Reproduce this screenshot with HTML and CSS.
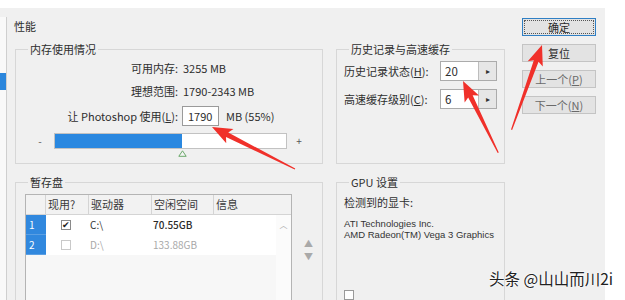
FILE: index.html
```html
<!DOCTYPE html>
<html lang="zh-CN">
<head>
<meta charset="utf-8">
<title>性能</title>
<link rel="stylesheet" href="styles.css">
</head>
<body>
<div class="page">
  <div class="dialog">
    <div class="nav"><div class="nav-sel"></div></div>
    <div class="main">
      <div class="title">性能</div>
      <div class="groups">
        <div class="group mem">
          <div class="legend">内存使用情况</div>
          <div class="mem-grid">
            <span class="lbl">可用内存:</span><span class="val">3255 MB</span>
            <span class="lbl">理想范围:</span><span class="val">1790-2343 MB</span>
            <span class="lbl">让 Photoshop 使用(<u>L</u>):</span>
            <span class="use"><span class="input">1790</span><span class="val">MB (55%)</span></span>
          </div>
          <div class="slider-row">
            <span class="pm">-</span>
            <div class="bar">
              <div class="fill" style="width:55%"></div>
              <svg class="thumb" width="9" height="7" viewBox="0 0 9 7"><path d="M4.5 0.8 L8.2 6.3 L0.8 6.3 Z" fill="#f4f4f4" stroke="#6aa86a" stroke-width="1"/></svg>
            </div>
            <span class="pm">+</span>
          </div>
        </div>

        <div class="group hist">
          <div class="legend">历史记录与高速缓存</div>
          <div class="hist-grid">
            <span class="lbl">历史记录状态(<u>H</u>):</span>
            <span class="spin"><span class="spin-val">20</span><span class="spin-btn">▸</span></span>
            <span class="lbl">高速缓存级别(<u>C</u>):</span>
            <span class="spin"><span class="spin-val">6</span><span class="spin-btn">▸</span></span>
          </div>
        </div>

        <div class="group scratch">
          <div class="legend">暂存盘</div>
          <div class="scratch-body">
            <div class="table">
              <div class="thead">
                <span class="th"></span>
                <span class="th">现用?</span>
                <span class="th">驱动器</span>
                <span class="th">空闲空间</span>
                <span class="th last">信息</span>
              </div>
              <div class="tbody">
                <div class="rows">
                  <span class="num">1</span>
                  <span class="cell center"><span class="check on">✔</span></span>
                  <span class="cell">C:\</span>
                  <span class="cell strong">70.55GB</span>
                  <span class="cell"></span>
                  <span class="num">2</span>
                  <span class="cell center"><span class="check"></span></span>
                  <span class="cell dim">D:\</span>
                  <span class="cell dim">133.88GB</span>
                  <span class="cell"></span>
                </div>
                <div class="vscroll"><span class="caret">︿</span></div>
              </div>
            </div>
            <div class="updown"><span>▲</span><span>▼</span></div>
          </div>
        </div>

        <div class="group gpu">
          <div class="legend">GPU 设置</div>
          <div class="gpu-label">检测到的显卡:</div>
          <div class="gpu-info">ATI Technologies Inc.<br>AMD Radeon(TM) Vega 3 Graphics</div>
          <div class="gpu-check"><span class="check"></span></div>
        </div>
      </div>
    </div>
    <div class="buttons">
      <div class="btn default"><span class="focus">确定</span></div>
      <div class="btn">复位</div>
      <div class="btn dis">上一个(<u>P</u>)</div>
      <div class="btn dis">下一个(<u>N</u>)</div>
    </div>
  </div>

  <svg class="arrows" width="625" height="300" viewBox="0 0 625 300">
    <g fill="#f0302a">
      <path transform="translate(212,127) rotate(26.8)" d="M0 0 L20 -8 L17 -2.4 L93 -0.5 L93 0.7 L17 2.6 L20 8 Z"/>
      <path transform="translate(463,81) rotate(63.8)" d="M0 0 L20 -8 L17 -2.4 L80 -0.5 L80 0.7 L17 2.6 L20 8 Z"/>
      <path transform="translate(542,45) rotate(109.7)" d="M0 0 L20 -8 L17 -2.4 L90 -0.5 L90 0.7 L17 2.6 L20 8 Z"/>
    </g>
  </svg>
  <div class="watermark">头条 @山山而川2i</div>
</div>
</body>
</html>
```

FILE: styles.css
```css
* { box-sizing: border-box; }
html, body { margin: 0; padding: 0; }
body {
  background: #ffffff;
  font-family: "Noto Sans CJK SC", "Noto Sans", sans-serif;
  font-size: 11px;
  color: #2e2e2e;
  width: 625px;
  height: 300px;
  overflow: hidden;
}
u { text-decoration: underline; text-underline-offset: 1px; }
.page { position: relative; width: 625px; height: 300px; overflow: hidden; }

.dialog {
  margin-top: 8px;
  width: 605px;
  height: 292px;
  background: #f0f0f0;
  display: flex;
  overflow: hidden;
}

.nav {
  width: 7px;
  margin-top: 9px;
  background: #f9f9f9;
  border-right: 1px solid #cfcfcf;
}
.nav-sel {
  margin-top: 56px;
  height: 17px;
  width: 6px;
  background: #2b86dc;
}

.main {
  width: 498px;
  padding: 11px 0 0 8px;
}
.title { line-height: 14px; height: 14px; margin-left: -1px; }

.groups {
  margin-top: 16px;
  display: grid;
  grid-template-columns: 308px 169px;
  grid-template-rows: 115px 140px;
  column-gap: 13px;
  row-gap: 18px;
}

.group {
  border: 1px solid #d7d7d7;
  position: relative;
}
.legend {
  width: fit-content;
  margin: -8px 0 0 12px;
  padding: 0 2px;
  background: #f0f0f0;
  line-height: 14px;
  height: 14px;
}

/* memory */
.mem-grid {
  margin-top: 4px;
  display: grid;
  grid-template-columns: 162px auto;
  grid-template-rows: 16px 16px 20px;
  column-gap: 5px;
  row-gap: 7px;
  align-items: center;
  line-height: 16px;
}
.lbl { text-align: right; white-space: nowrap; }
.val { white-space: nowrap; }
.use { display: flex; align-items: center; gap: 7px; margin-left: -1px; }
.input {
  width: 37px;
  height: 20px;
  border: 1px solid #9a9a9a;
  background: #fff;
  padding-left: 5px;
  line-height: 18px;
}

.slider-row {
  margin-top: 7px;
  display: flex;
  align-items: center;
  height: 16px;
}
.pm {
  width: 8px;
  text-align: center;
  color: #555;
  font-size: 10px;
  line-height: 16px;
}
.pm:first-child { margin-left: 20px; margin-right: 10px; }
.pm:last-child { margin-left: 8px; }
.bar {
  position: relative;
  width: 233px;
  height: 16px;
  border: 1px solid #c2c2c2;
  background: #ffffff;
}
.fill { height: 100%; background: #2a88e0; }
.thumb { position: absolute; left: 123px; top: 16px; }

/* history */
.hist-grid {
  margin: 5px 0 0 7px;
  display: grid;
  grid-template-columns: 93px 57px;
  grid-template-rows: 20px 20px;
  column-gap: 3px;
  row-gap: 8px;
  align-items: center;
}
.hist-grid .lbl { text-align: left; }
.spin {
  display: flex;
  height: 20px;
  border: 1px solid #ababab;
  background: #fff;
}
.spin-val { flex: 1; padding-left: 4px; line-height: 18px; font-size: 11.5px; }
.spin-btn {
  width: 18px;
  border-left: 1px solid #bdbdbd;
  background: #e6e6e6;
  text-align: center;
  font-size: 8px;
  line-height: 18px;
  color: #333;
}

/* scratch */
.scratch-body {
  margin: 5px 0 0 9px;
  display: flex;
  align-items: flex-start;
}
.table {
  width: 267px;
  height: 130px;
  border: 1px solid #b4b4b4;
  background: #f7f7f7;
}
.thead {
  display: grid;
  grid-template-columns: 20px 43px 63px 62px 1fr;
  height: 20px;
  background: #f2f2f2;
  border-bottom: 1px solid #d4d4d4;
}
.th {
  border-right: 1px solid #d4d4d4;
  padding-left: 2px;
  line-height: 19px;
  color: #3a3a3a;
}
.th.last { border-right: none; }
.tbody { display: flex; }
.rows {
  flex: 1;
  display: grid;
  grid-template-columns: 20px 43px 63px 62px 1fr;
  grid-auto-rows: 20px;
  background: #fff;
  height: 40px;
}
.num {
  background: #3188de;
  color: #fff;
  font-size: 10px;
  padding-left: 3px;
  line-height: 20px;
  border-bottom: 1px solid #5b9fe3;
}
.cell {
  line-height: 20px;
  padding-left: 1px;
  font-size: 10px;
  color: #333;
}
.cell.center { display: flex; align-items: center; justify-content: center; padding-left: 0; margin-left: -4px; }
.cell.strong { font-weight: 500; color: #2a2a2a; }
.cell.dim { color: #a8a8a8; }
.check {
  width: 10px;
  height: 10px;
  border: 1px solid #c9c9c9;
  background: #fff;
  font-size: 9px;
  line-height: 8px;
  text-align: center;
  color: #222;
}
.check.on { border-color: #8a8a8a; }
.vscroll {
  width: 15px;
  height: 109px;
  background: #fbfbfb;
  text-align: center;
}
.caret { font-size: 8px; color: #b0b0b0; line-height: 14px; }
.updown {
  margin-left: 12px;
  padding-top: 44px;
  display: flex;
  flex-direction: column;
  gap: 2px;
  font-size: 9px;
  color: #a9a9a9;
  line-height: 11px;
}

/* gpu */
.gpu-label { margin: 5px 0 0 7px; line-height: 16px; }
.gpu-info {
  margin: 8px 0 0 7px;
  font-family: "Liberation Sans", Arial, sans-serif;
  font-size: 9.5px;
  line-height: 11px;
  color: #333;
}
.gpu-check { margin: 50px 0 0 7px; }
.gpu-check .check { display: block; border-color: #9a9a9a; }

/* buttons */
.buttons {
  margin-left: 17px;
  padding-top: 10px;
  width: 74px;
  display: flex;
  flex-direction: column;
  gap: 8px;
}
.btn {
  height: 18px;
  border: 1px solid #c4c4c4;
  background: #e3e3e3;
  text-align: center;
  line-height: 16px;
  color: #2a2a2a;
}
.btn.default {
  border: 1px solid #2f7fc4;
  padding: 1px;
}
.btn.default .focus {
  display: block;
  height: 14px;
  line-height: 13px;
  border: 1px dotted #555;
}
.btn.dis { color: #6a6a6a; }

.arrows { position: absolute; left: 0; top: 0; pointer-events: none; }

.watermark {
  position: absolute;
  left: 489px;
  top: 268px;
  font-size: 15.5px;
  line-height: 20px;
  color: #222;
  white-space: nowrap;
  text-shadow: 0 0 2px #fff, 0 0 2px #fff, 0 0 1px #fff;
}
```
